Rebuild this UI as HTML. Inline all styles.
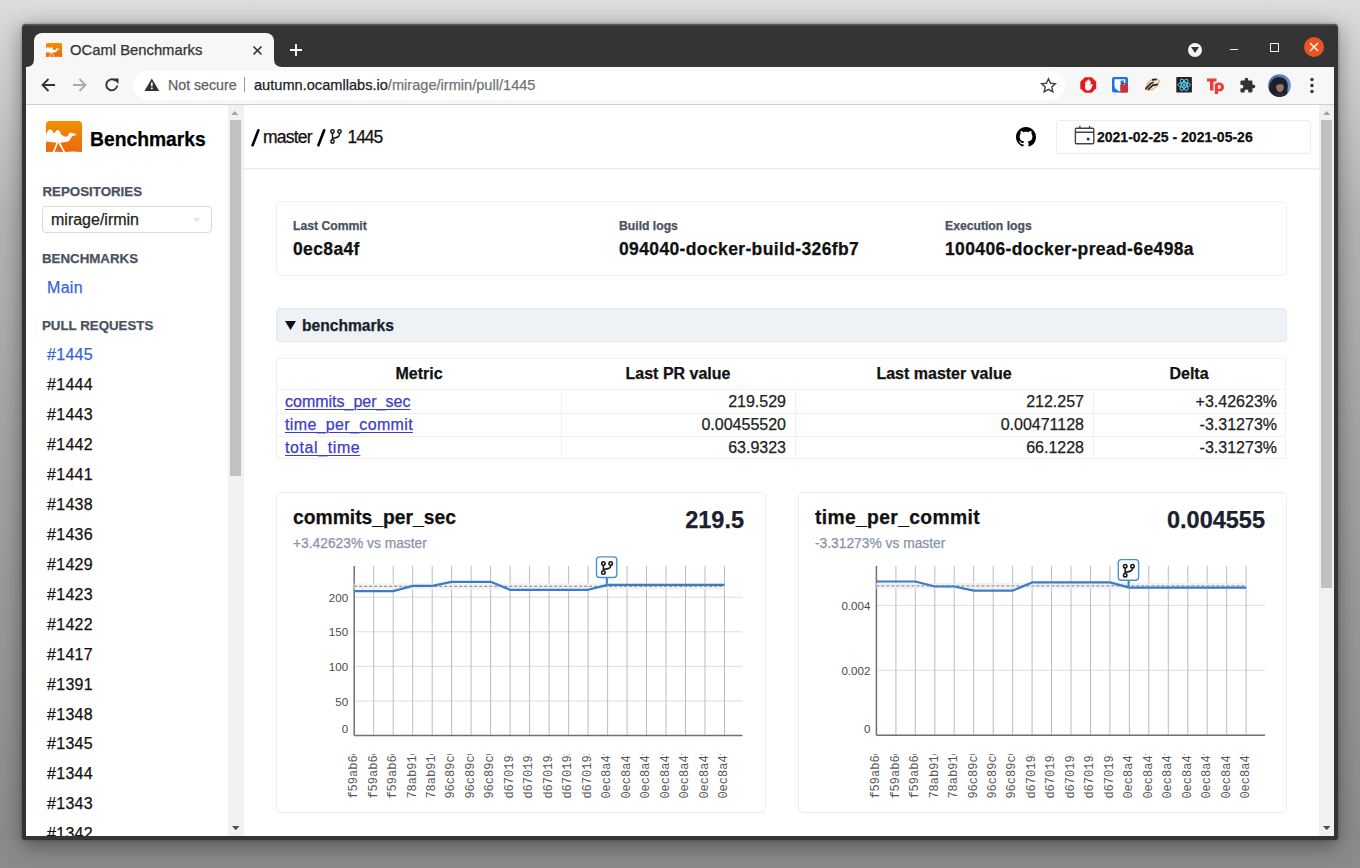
<!DOCTYPE html>
<html><head><meta charset="utf-8">
<style>
*{box-sizing:border-box}
html,body{margin:0;padding:0}
body{width:1360px;height:868px;overflow:hidden;position:relative;font-family:"Liberation Sans",sans-serif;
background:linear-gradient(180deg,#dcdcdc 0%,#cfcfcf 8%,#b4b4b4 25%,#a4a4a4 50%,#969696 75%,#8a8a8a 100%);}
.a{position:absolute}
.t{position:absolute;white-space:nowrap;line-height:1;-webkit-text-stroke:0.25px currentColor}
svg text{font-family:"Liberation Sans",sans-serif}
</style></head><body>

<div class="a" style="left:22px;top:24px;width:1316px;height:816px;background:#343434;border-radius:4px 4px 3px 3px;box-shadow:inset 0 1.5px 0 #5a5a5a,0 5px 22px rgba(0,0,0,.42),0 0 3px rgba(0,0,0,.35)"></div>
<div class="a" style="left:34px;top:33px;width:240px;height:34px;background:#f7f7f7;border-radius:8px 8px 0 0"></div>
<svg class="a" style="left:26px;top:59px" width="8" height="8"><path d="M0 8 Q8 8 8 0 V8Z" fill="#f7f7f7"/></svg>
<svg class="a" style="left:274px;top:59px" width="8" height="8"><path d="M0 0 Q0 8 8 8 H0Z" fill="#f7f7f7"/></svg>
<svg class="a" style="left:46px;top:43px" width="16" height="14" viewBox="0 0 36 31"><defs><linearGradient id="og" x1="0" y1="0" x2="0" y2="1"><stop offset="0" stop-color="#f29100"/><stop offset="1" stop-color="#ec670f"/></linearGradient></defs><path d="M0 3.5Q0 0 3.5 0H32.5Q36 0 36 3.5V31Q27 30 18 31Q9 30.5 0 31Z" fill="url(#og)"/><path d="M0 14.6C0.6 11.2 2.2 8.5 4.3 8.5C6.4 8.5 7 11.9 8.1 12.3C9.2 11.9 9.7 8.9 11.7 8.9C13.8 8.9 14.4 12.6 15.6 13.8C17 15 19.2 16 20.9 15.6C22.4 15.2 22.6 12 24.1 11.7C25.7 11.5 27.4 12.2 28.8 12.7L31 13.8L28.7 14.6C27.3 14.9 26.2 15 25.6 15.7C24.8 16.7 24.5 18.9 22.9 19.9C20.9 21 18.5 21.2 16 21.4L12 21.7C8 21.7 4 20.9 0 20.6Z" fill="#fff"/><path d="M11.6 21L7.4 31.5M12.8 21L18.6 31.5" stroke="#fff" stroke-width="1.6" fill="none"/></svg>
<div class="t" style="left:70px;top:43px;font-size:14.8px;color:#333;font-weight:normal;">OCaml Benchmarks</div>
<svg class="a" style="left:252px;top:45px" width="11" height="11"><path d="M1.5 1.5L9.5 9.5M9.5 1.5L1.5 9.5" stroke="#333" stroke-width="1.6"/></svg>
<svg class="a" style="left:289px;top:43px" width="14" height="14"><path d="M7 1V13M1 7H13" stroke="#fff" stroke-width="1.8"/></svg>
<div class="a" style="left:1188px;top:43px;width:14px;height:14px;border-radius:50%;background:#f4f4f4"></div>
<svg class="a" style="left:1191px;top:47px" width="8" height="6"><path d="M0 0H8L4 6Z" fill="#333"/></svg>
<div class="a" style="left:1230px;top:48.5px;width:8px;height:1.5px;background:#eee"></div>
<div class="a" style="left:1270px;top:43px;width:8.5px;height:8.5px;border:1.3px solid #eee"></div>
<div class="a" style="left:1304px;top:37px;width:20px;height:20px;border-radius:50%;background:#e95420"></div>
<svg class="a" style="left:1308px;top:41px" width="12" height="12"><path d="M2 2L10 10M10 2L2 10" stroke="#fff" stroke-width="1.4"/></svg>
<div class="a" style="left:26px;top:67px;width:1308px;height:38px;background:#f7f7f7;border-bottom:1px solid #cfcfcf"></div>
<div class="a" style="left:133px;top:71px;width:932px;height:28.5px;background:#fff;border-radius:14px"></div>
<svg class="a" style="left:40px;top:77px" width="16" height="16"><path d="M15 8H2.5M8.5 2L2.5 8L8.5 14" fill="none" stroke="#333" stroke-width="1.8"/></svg>
<svg class="a" style="left:72px;top:77px" width="16" height="16"><path d="M1 8H13.5M7.5 2L13.5 8L7.5 14" fill="none" stroke="#aaa" stroke-width="1.8"/></svg>
<svg class="a" style="left:104px;top:77px" width="16" height="16"><path d="M13.2 8.5A5.5 5.5 0 1 1 11.6 3.9" fill="none" stroke="#333" stroke-width="1.9"/><path d="M9 1.5H14.5V7Z" fill="#333"/></svg>
<svg class="a" style="left:144px;top:78px" width="16" height="14"><path d="M7.8 0.5L15.2 13H0.4Z" fill="#333"/><path d="M7.8 4.6V8.3M7.8 9.6V11.3" stroke="#fff" stroke-width="1.7"/></svg>
<div class="t" style="left:168px;top:78px;font-size:14.2px;color:#5f6368;font-weight:normal;">Not secure</div>
<div class="a" style="left:243.5px;top:77px;width:1px;height:15px;background:#999"></div>
<div class="t" style="left:254px;top:78px;font-size:14.6px;color:#202124;font-weight:normal;">autumn.ocamllabs.io<span style="color:#70757a">/mirage/irmin/pull/1445</span></div>
<svg class="a" style="left:1040px;top:77px" width="17" height="17" viewBox="0 0 24 24"><path d="M12 2.5l2.9 6.3 6.9.7-5.2 4.6 1.5 6.8L12 17.4l-6.1 3.5 1.5-6.8-5.2-4.6 6.9-.7z" fill="none" stroke="#444" stroke-width="2"/></svg>
<svg class="a" style="left:1080px;top:77px" width="16.5" height="16" viewBox="0 0 16.5 16"><path d="M4.8 0.3H11.7L16.2 4.7V11.3L11.7 15.7H4.8L0.3 11.3V4.7Z" fill="#e21b1b"/><path d="M5.6 12.4C5 11.2 5 9.5 5.2 7.8V5.2C5.2 4.6 6.4 4.6 6.4 5.2V7.6L6.6 3.6C6.6 3 7.8 3 7.8 3.6V7.5L8 2.9C8 2.3 9.2 2.3 9.2 2.9L9.3 7.6L9.5 3.8C9.6 3.2 10.7 3.3 10.7 3.9V8.7L11.6 7.3C12 6.7 13 7.1 12.7 7.8L11.1 11.6C10.6 12.9 9.6 13.5 8.3 13.5C7 13.5 6.1 13.2 5.6 12.4Z" fill="#fff"/></svg>
<svg class="a" style="left:1112px;top:77px" width="16" height="16" viewBox="0 0 16 16"><rect x="0" y="0" width="16" height="15.5" rx="2" fill="#1a73e8"/><path d="M2.5 2.2H13.3V8.5C13.3 11.8 10.5 13.4 7.9 14.3C5.2 13.4 2.5 11.8 2.5 8.5Z" fill="#fff"/><path d="M8.6 3.4H11.8V8.6C11.8 10.8 10.3 12 8.6 12.8Z" fill="#1a73e8"/><path d="M9.6 8.2V7.4C9.6 5.9 13.8 5.9 13.8 7.4V8.2" stroke="#c62828" stroke-width="1.3" fill="none"/><rect x="8.3" y="8" width="7.7" height="7.5" rx="0.8" fill="#d32f2f"/></svg>
<svg class="a" style="left:1144px;top:78px" width="16" height="13" viewBox="0 0 16 13"><path d="M1 11.5L4 4.5L8 1.5L12.5 0.8L15.3 2.5L14 7L9 11.5L4 12.2Z" fill="#f3e6d8" stroke="#e8893a" stroke-width="0.9"/><path d="M1.6 11L6.5 5.6L9.5 4.2M4 11.6L8.6 7.3L13.8 6.3M8 1.8L12.6 1.4" stroke="#222" stroke-width="1.7" fill="none"/></svg>
<svg class="a" style="left:1176px;top:77px" width="16.2" height="15.6" viewBox="0 0 18 18"><rect width="18" height="18" rx="0.8" fill="#20232a"/><g fill="none" stroke="#61dafb" stroke-width="1.1"><ellipse cx="9" cy="9" rx="7.2" ry="2.8"/><ellipse cx="9" cy="9" rx="7.2" ry="2.8" transform="rotate(60 9 9)"/><ellipse cx="9" cy="9" rx="7.2" ry="2.8" transform="rotate(120 9 9)"/></g><circle cx="9" cy="9" r="1.5" fill="#61dafb"/></svg>
<svg class="a" style="left:1206px;top:77px" width="20" height="17" viewBox="0 0 20 17"><path d="M1 1.5H10.5V4.6H7.5V13.5H4V4.6H1Z" fill="#ee3b36"/><path d="M9.5 6.4C10.6 5.8 11.8 5.5 13 5.5C16 5.5 18 7.3 18 10C18 12.8 16.1 14.5 13.5 14.5C12.9 14.5 12.4 14.4 12 14.2V17H8.8V7.2Z M12 8.3V11.6C12.4 11.8 12.8 11.9 13.2 11.9C14.3 11.9 14.9 11.1 14.9 10C14.9 8.8 14.2 8 13.1 8C12.7 8 12.3 8.1 12 8.3Z" fill="#ee3b36" fill-rule="evenodd"/></svg>
<svg class="a" style="left:1239px;top:77px" width="17" height="17" viewBox="0 0 24 24"><path d="M20.5 11H19V7a2 2 0 0 0-2-2h-4V3.5a2.5 2.5 0 0 0-5 0V5H4a2 2 0 0 0-2 2v3.8h1.5a2.7 2.7 0 0 1 0 5.4H2V20a2 2 0 0 0 2 2h3.8v-1.5a2.7 2.7 0 0 1 5.4 0V22H17a2 2 0 0 0 2-2v-4h1.5a2.5 2.5 0 0 0 0-5z" fill="#333"/></svg>
<svg class="a" style="left:1268px;top:74px" width="23" height="23" viewBox="0 0 23 23"><defs><clipPath id="av"><circle cx="11.5" cy="11.5" r="11.3"/></clipPath><radialGradient id="avg" cx="0.7" cy="0.5" r="0.7"><stop offset="0" stop-color="#7fa8dc"/><stop offset="1" stop-color="#3f6aa8"/></radialGradient></defs><g clip-path="url(#av)"><rect width="23" height="23" fill="url(#avg)"/><path d="M1 23V15C1.5 8.5 4.5 3.5 10.5 3C16.5 2.8 19.5 6.5 19.8 11.5L19 23Z" fill="#1c2028"/><ellipse cx="12" cy="13.3" rx="3.8" ry="4.8" fill="#9a7660"/><path d="M7.8 11.2C8.6 8.4 10.8 7.8 12.6 7.9C14.8 8.1 16 9.6 16.2 11.3C14.8 10.2 12.8 9.9 10.6 10.4Z" fill="#1c2028"/><path d="M5 23C5.8 20 8.5 18.3 12 18.3C15.5 18.3 18 20 18.8 23Z" fill="#262b36"/></g></svg>
<svg class="a" style="left:1309px;top:77px" width="6" height="17"><circle cx="3" cy="2.5" r="1.7" fill="#333"/><circle cx="3" cy="8.5" r="1.7" fill="#333"/><circle cx="3" cy="14.5" r="1.7" fill="#333"/></svg>
<div class="a" style="left:26px;top:105px;width:1308px;height:731px;background:#fff;overflow:hidden"></div>
<div class="a" style="left:228px;top:105px;width:16px;height:731px;background:#f1f1f1"></div>
<div class="a" style="left:230px;top:120px;width:11px;height:356px;background:#c1c1c1"></div>
<svg class="a" style="left:231.3px;top:111px" width="7.5" height="4.2"><path d="M0 4.2H7.5L3.75 0Z" fill="#a3a3a3"/></svg>
<svg class="a" style="left:231.5px;top:825.5px" width="7.5" height="4.2"><path d="M0 0H7.5L3.75 4.2Z" fill="#505050"/></svg>
<div class="a" style="left:1319px;top:105px;width:15px;height:731px;background:#f1f1f1"></div>
<div class="a" style="left:1321px;top:120px;width:11px;height:468px;background:#c1c1c1"></div>
<svg class="a" style="left:1322.8px;top:111px" width="7.5" height="4.2"><path d="M0 4.2H7.5L3.75 0Z" fill="#a3a3a3"/></svg>
<svg class="a" style="left:1322.7px;top:826px" width="7.5" height="4.2"><path d="M0 0H7.5L3.75 4.2Z" fill="#505050"/></svg>
<svg class="a" style="left:46px;top:121px" width="36" height="31" viewBox="0 0 36 31"><defs><linearGradient id="og2" x1="0" y1="0" x2="0" y2="1"><stop offset="0" stop-color="#f29100"/><stop offset="1" stop-color="#ec670f"/></linearGradient></defs><path d="M0 3.5Q0 0 3.5 0H32.5Q36 0 36 3.5V31Q27 30 18 31Q9 30.5 0 31Z" fill="url(#og2)"/><path d="M0 14.6C0.6 11.2 2.2 8.5 4.3 8.5C6.4 8.5 7 11.9 8.1 12.3C9.2 11.9 9.7 8.9 11.7 8.9C13.8 8.9 14.4 12.6 15.6 13.8C17 15 19.2 16 20.9 15.6C22.4 15.2 22.6 12 24.1 11.7C25.7 11.5 27.4 12.2 28.8 12.7L31 13.8L28.7 14.6C27.3 14.9 26.2 15 25.6 15.7C24.8 16.7 24.5 18.9 22.9 19.9C20.9 21 18.5 21.2 16 21.4L12 21.7C8 21.7 4 20.9 0 20.6Z" fill="#fff"/><path d="M11.6 21L7.4 31.5M12.8 21L18.6 31.5" stroke="#fff" stroke-width="1.6" fill="none"/></svg>
<div class="t" style="left:90px;top:130px;font-size:19.3px;color:#000;font-weight:bold;">Benchmarks</div>
<div class="t" style="left:42.5px;top:184.5px;font-size:13.3px;color:#4a5260;font-weight:bold;">REPOSITORIES</div>
<div class="a" style="left:42px;top:206px;width:170px;height:27px;border:1px solid #d9d9d9;border-radius:4px;background:#fff"></div>
<div class="t" style="left:51px;top:212px;font-size:16px;color:#222;font-weight:normal;">mirage/irmin</div>
<svg class="a" style="left:193px;top:218px" width="7.5" height="4"><path d="M0 0H7.5L3.75 4Z" fill="#e2e2e2"/></svg>
<div class="t" style="left:42px;top:252px;font-size:13.3px;color:#4a5260;font-weight:bold;">BENCHMARKS</div>
<div class="t" style="left:47px;top:280px;font-size:16px;color:#3466d6;font-weight:normal;letter-spacing:0.3px">Main</div>
<div class="t" style="left:42px;top:319px;font-size:13.3px;color:#4a5260;font-weight:bold;">PULL REQUESTS</div>
<div class="t" style="left:47px;top:347.0px;font-size:16px;color:#3466d6;font-weight:normal;letter-spacing:0.3px">#1445</div>
<div class="t" style="left:47px;top:376.96px;font-size:16px;color:#111;font-weight:normal;letter-spacing:0.3px">#1444</div>
<div class="t" style="left:47px;top:406.92px;font-size:16px;color:#111;font-weight:normal;letter-spacing:0.3px">#1443</div>
<div class="t" style="left:47px;top:436.88px;font-size:16px;color:#111;font-weight:normal;letter-spacing:0.3px">#1442</div>
<div class="t" style="left:47px;top:466.84000000000003px;font-size:16px;color:#111;font-weight:normal;letter-spacing:0.3px">#1441</div>
<div class="t" style="left:47px;top:496.8px;font-size:16px;color:#111;font-weight:normal;letter-spacing:0.3px">#1438</div>
<div class="t" style="left:47px;top:526.76px;font-size:16px;color:#111;font-weight:normal;letter-spacing:0.3px">#1436</div>
<div class="t" style="left:47px;top:556.72px;font-size:16px;color:#111;font-weight:normal;letter-spacing:0.3px">#1429</div>
<div class="t" style="left:47px;top:586.6800000000001px;font-size:16px;color:#111;font-weight:normal;letter-spacing:0.3px">#1423</div>
<div class="t" style="left:47px;top:616.64px;font-size:16px;color:#111;font-weight:normal;letter-spacing:0.3px">#1422</div>
<div class="t" style="left:47px;top:646.6px;font-size:16px;color:#111;font-weight:normal;letter-spacing:0.3px">#1417</div>
<div class="t" style="left:47px;top:676.56px;font-size:16px;color:#111;font-weight:normal;letter-spacing:0.3px">#1391</div>
<div class="t" style="left:47px;top:706.52px;font-size:16px;color:#111;font-weight:normal;letter-spacing:0.3px">#1348</div>
<div class="t" style="left:47px;top:736.48px;font-size:16px;color:#111;font-weight:normal;letter-spacing:0.3px">#1345</div>
<div class="t" style="left:47px;top:766.44px;font-size:16px;color:#111;font-weight:normal;letter-spacing:0.3px">#1344</div>
<div class="t" style="left:47px;top:796.4000000000001px;font-size:16px;color:#111;font-weight:normal;letter-spacing:0.3px">#1343</div>
<div class="t" style="left:47px;top:826.36px;font-size:16px;color:#111;font-weight:normal;letter-spacing:0.3px">#1342</div>
<div class="a" style="left:244px;top:168px;width:1075px;height:1px;background:#e9ebee"></div><div class="a" style="left:244px;top:169px;width:1075px;height:1px;background:#f6f7f8"></div>
<svg class="a" style="left:248px;top:126px" width="14" height="22"><path d="M10.4 4.3L4.6 19.2" stroke="#000" stroke-width="2.6" stroke-linecap="round"/></svg>
<svg class="a" style="left:314px;top:126px" width="14" height="22"><path d="M10.2 4.3L4.4 19.2" stroke="#000" stroke-width="2.6" stroke-linecap="round"/></svg>
<div class="t" style="left:263px;top:129px;font-size:17.5px;color:#111;font-weight:normal;letter-spacing:-0.8px">master</div>
<svg class="a" style="left:330px;top:129px" width="12" height="15" viewBox="0 0 12 15"><g fill="none" stroke="#111" stroke-width="1.4"><circle cx="2.5" cy="2.5" r="1.7"/><circle cx="9.5" cy="2.5" r="1.7"/><circle cx="2.5" cy="12.5" r="1.7"/><path d="M2.5 4.2V10.8M9.5 4.2V5.5C9.5 8 7 8.5 2.5 9.5"/></g></svg>
<div class="t" style="left:347.5px;top:129px;font-size:17.5px;color:#111;font-weight:normal;letter-spacing:-1.1px">1445</div>
<svg class="a" style="left:1015.5px;top:126.5px" width="20" height="20" viewBox="0 0 16 16"><path fill="#000" d="M8 0C3.58 0 0 3.58 0 8c0 3.54 2.29 6.53 5.47 7.59.4.07.55-.17.55-.38 0-.19-.01-.82-.01-1.49-2.01.37-2.53-.49-2.69-.94-.09-.23-.48-.94-.82-1.13-.28-.15-.68-.52-.01-.53.63-.01 1.08.58 1.23.82.72 1.21 1.87.87 2.33.66.07-.52.28-.87.51-1.07-1.78-.2-3.64-.89-3.64-3.95 0-.87.31-1.59.82-2.15-.08-.2-.36-1.02.08-2.12 0 0 .67-.21 2.2.82.64-.18 1.32-.27 2-.27.68 0 1.36.09 2 .27 1.53-1.04 2.2-.82 2.2-.82.44 1.1.16 1.92.08 2.12.51.56.82 1.27.82 2.15 0 3.07-1.87 3.75-3.65 3.95.29.25.54.73.54 1.48 0 1.07-.01 1.93-.01 2.2 0 .21.15.46.55.38A8.013 8.013 0 0016 8c0-4.42-3.58-8-8-8z"/></svg>
<div class="a" style="left:1056px;top:120px;width:255px;height:34px;border:1px solid #ececec;border-radius:4px"></div>
<svg class="a" style="left:1074px;top:125px" width="21" height="20" viewBox="0 0 21 20"><g fill="none" stroke="#444" stroke-width="1.4"><rect x="1.4" y="3.2" width="18.4" height="15.6" rx="1.2"/><path d="M1.4 7.3H19.8M5.9 0.8V3.5M15.6 0.8V3.5"/></g><circle cx="14.2" cy="14" r="1.5" fill="#333"/></svg>
<div class="t" style="left:1097px;top:130px;font-size:14px;color:#111;font-weight:bold;">2021-02-25 - 2021-05-26</div>
<div class="a" style="left:276px;top:201px;width:1011px;height:75px;border:1px solid #eef0f2;border-radius:5px"></div>
<div class="t" style="left:293px;top:219.5px;font-size:12.2px;color:#4a5260;font-weight:bold;">Last Commit</div>
<div class="t" style="left:293px;top:241px;font-size:17.5px;color:#111;font-weight:bold;letter-spacing:0.37px">0ec8a4f</div>
<div class="t" style="left:619px;top:219.5px;font-size:12.2px;color:#4a5260;font-weight:bold;">Build logs</div>
<div class="t" style="left:619px;top:241px;font-size:17.5px;color:#111;font-weight:bold;letter-spacing:0.37px">094040-docker-build-326fb7</div>
<div class="t" style="left:945px;top:219.5px;font-size:12.2px;color:#4a5260;font-weight:bold;">Execution logs</div>
<div class="t" style="left:945px;top:241px;font-size:17.5px;color:#111;font-weight:bold;letter-spacing:0.37px">100406-docker-pread-6e498a</div>
<div class="a" style="left:276px;top:308px;width:1011px;height:34px;background:#edf2f7;border:1px solid #e2e8f0;border-radius:4px"></div>
<svg class="a" style="left:285px;top:321px" width="11" height="9"><path d="M0 0H11L5.5 9Z" fill="#111"/></svg>
<div class="t" style="left:302px;top:318px;font-size:15.6px;color:#1a202c;font-weight:bold;">benchmarks</div>
<div class="a" style="left:276px;top:358px;width:1010px;height:101px;border:1px solid #eef0f2"></div>
<div class="a" style="left:276px;top:389px;width:1010px;height:1px;background:#eef0f2"></div>
<div class="a" style="left:276px;top:413px;width:1010px;height:1px;background:#eef0f2"></div>
<div class="a" style="left:276px;top:436px;width:1010px;height:1px;background:#eef0f2"></div>
<div class="a" style="left:561px;top:390px;width:1px;height:69px;background:#eef0f2"></div>
<div class="a" style="left:795px;top:390px;width:1px;height:69px;background:#eef0f2"></div>
<div class="a" style="left:1093px;top:390px;width:1px;height:69px;background:#eef0f2"></div>
<div class="t" style="left:319px;width:200px;text-align:center;top:366px;font-size:16px;font-weight:bold;color:#111">Metric</div>
<div class="t" style="left:578px;width:200px;text-align:center;top:366px;font-size:16px;font-weight:bold;color:#111">Last PR value</div>
<div class="t" style="left:844px;width:200px;text-align:center;top:366px;font-size:16px;font-weight:bold;color:#111">Last master value</div>
<div class="t" style="left:1089px;width:200px;text-align:center;top:366px;font-size:16px;font-weight:bold;color:#111">Delta</div>
<div class="t" style="left:285px;top:394px;font-size:16px;color:#3c3cc8;font-weight:normal;letter-spacing:0px"><span style="text-decoration:underline;text-decoration-thickness:1.3px;text-underline-offset:2px">commits_per_sec</span></div>
<div class="t" style="left:561px;width:225px;text-align:right;top:394px;font-size:16px;color:#222">219.529</div>
<div class="t" style="left:795px;width:289px;text-align:right;top:394px;font-size:16px;color:#222">212.257</div>
<div class="t" style="left:1093px;width:184px;text-align:right;top:394px;font-size:16px;color:#222">+3.42623%</div>
<div class="t" style="left:285px;top:417px;font-size:16px;color:#3c3cc8;font-weight:normal;letter-spacing:0.35px"><span style="text-decoration:underline;text-decoration-thickness:1.3px;text-underline-offset:2px">time_per_commit</span></div>
<div class="t" style="left:561px;width:225px;text-align:right;top:417px;font-size:16px;color:#222">0.00455520</div>
<div class="t" style="left:795px;width:289px;text-align:right;top:417px;font-size:16px;color:#222">0.00471128</div>
<div class="t" style="left:1093px;width:184px;text-align:right;top:417px;font-size:16px;color:#222">-3.31273%</div>
<div class="t" style="left:285px;top:440px;font-size:16px;color:#3c3cc8;font-weight:normal;letter-spacing:0.6px"><span style="text-decoration:underline;text-decoration-thickness:1.3px;text-underline-offset:2px">total_time</span></div>
<div class="t" style="left:561px;width:225px;text-align:right;top:440px;font-size:16px;color:#222">63.9323</div>
<div class="t" style="left:795px;width:289px;text-align:right;top:440px;font-size:16px;color:#222">66.1228</div>
<div class="t" style="left:1093px;width:184px;text-align:right;top:440px;font-size:16px;color:#222">-3.31273%</div>
<div class="a" style="left:276px;top:492px;width:490px;height:321px;border:1px solid #eceef0;border-radius:5px;box-shadow:0 1px 1px rgba(0,0,0,.02)"></div>
<div class="a" style="left:798px;top:492px;width:489px;height:321px;border:1px solid #eceef0;border-radius:5px;box-shadow:0 1px 1px rgba(0,0,0,.02)"></div>
<div class="t" style="left:293px;top:508px;font-size:19.3px;color:#111;font-weight:bold;">commits_per_sec</div>
<div class="t" style="left:293px;top:537px;font-size:13.8px;color:#8795a8;font-weight:normal;">+3.42623% vs master</div>
<div class="t" style="left:600px;width:144px;text-align:right;top:509px;font-size:23.5px;font-weight:bold;color:#1a202c">219.5</div>
<div class="t" style="left:815px;top:508px;font-size:19.3px;color:#111;font-weight:bold;letter-spacing:0.35px">time_per_commit</div>
<div class="t" style="left:815px;top:537px;font-size:13.8px;color:#8795a8;font-weight:normal;">-3.31273% vs master</div>
<div class="t" style="left:1065px;width:200px;text-align:right;top:509px;font-size:23.5px;font-weight:bold;color:#1a202c">0.004555</div>
<svg class="a" style="left:0;top:0" width="1360" height="868"><defs><clipPath id="lc"><rect x="0" y="754" width="1360" height="60"/></clipPath></defs>
<line x1="354.2" y1="597.2" x2="742.4" y2="597.2" stroke="#dedede" stroke-width="1"/>
<line x1="354.2" y1="631.8" x2="742.4" y2="631.8" stroke="#dedede" stroke-width="1"/>
<line x1="354.2" y1="666.4" x2="742.4" y2="666.4" stroke="#dedede" stroke-width="1"/>
<line x1="354.2" y1="701" x2="742.4" y2="701" stroke="#dedede" stroke-width="1"/>
<line x1="354.2" y1="735.6" x2="742.4" y2="735.6" stroke="#dedede" stroke-width="1"/>
<line x1="373.7" y1="566" x2="373.7" y2="735.6" stroke="#bdbdbd" stroke-width="1"/>
<line x1="393.2" y1="566" x2="393.2" y2="735.6" stroke="#bdbdbd" stroke-width="1"/>
<line x1="412.7" y1="566" x2="412.7" y2="735.6" stroke="#bdbdbd" stroke-width="1"/>
<line x1="432.2" y1="566" x2="432.2" y2="735.6" stroke="#bdbdbd" stroke-width="1"/>
<line x1="451.6" y1="566" x2="451.6" y2="735.6" stroke="#bdbdbd" stroke-width="1"/>
<line x1="471.1" y1="566" x2="471.1" y2="735.6" stroke="#bdbdbd" stroke-width="1"/>
<line x1="490.6" y1="566" x2="490.6" y2="735.6" stroke="#bdbdbd" stroke-width="1"/>
<line x1="510.1" y1="566" x2="510.1" y2="735.6" stroke="#bdbdbd" stroke-width="1"/>
<line x1="529.6" y1="566" x2="529.6" y2="735.6" stroke="#bdbdbd" stroke-width="1"/>
<line x1="549.1" y1="566" x2="549.1" y2="735.6" stroke="#bdbdbd" stroke-width="1"/>
<line x1="568.6" y1="566" x2="568.6" y2="735.6" stroke="#bdbdbd" stroke-width="1"/>
<line x1="588.1" y1="566" x2="588.1" y2="735.6" stroke="#bdbdbd" stroke-width="1"/>
<line x1="607.6" y1="566" x2="607.6" y2="735.6" stroke="#bdbdbd" stroke-width="1"/>
<line x1="627.1" y1="566" x2="627.1" y2="735.6" stroke="#bdbdbd" stroke-width="1"/>
<line x1="646.5" y1="566" x2="646.5" y2="735.6" stroke="#bdbdbd" stroke-width="1"/>
<line x1="666.0" y1="566" x2="666.0" y2="735.6" stroke="#bdbdbd" stroke-width="1"/>
<line x1="685.5" y1="566" x2="685.5" y2="735.6" stroke="#bdbdbd" stroke-width="1"/>
<line x1="705.0" y1="566" x2="705.0" y2="735.6" stroke="#bdbdbd" stroke-width="1"/>
<line x1="724.5" y1="566" x2="724.5" y2="735.6" stroke="#bdbdbd" stroke-width="1"/>
<line x1="354.2" y1="566" x2="354.2" y2="735.6" stroke="#707070" stroke-width="1.5"/>
<line x1="354.2" y1="735.6" x2="742.4" y2="735.6" stroke="#707070" stroke-width="1.5"/>
<text x="348.2" y="601.7" text-anchor="end" style="font-size:11.6px" fill="#4a4a4a">200</text>
<text x="348.2" y="636.3" text-anchor="end" style="font-size:11.6px" fill="#4a4a4a">150</text>
<text x="348.2" y="670.9" text-anchor="end" style="font-size:11.6px" fill="#4a4a4a">100</text>
<text x="348.2" y="705.5" text-anchor="end" style="font-size:11.6px" fill="#4a4a4a">50</text>
<text x="348.2" y="733.3000000000001" text-anchor="end" style="font-size:11.6px" fill="#4a4a4a">0</text>
<rect x="354.2" y="583.4" width="370.31" height="6" fill="#eee" opacity=".8"/>
<line x1="354.2" y1="586.4" x2="724.5" y2="586.4" stroke="#999" stroke-width="1.3" stroke-dasharray="3 2"/>
<polyline points="354.2,591.1 373.7,591.1 393.2,591.1 412.7,585.9 432.2,585.9 451.6,581.8 471.1,581.8 490.6,581.8 510.1,589.8 529.6,589.8 549.1,589.8 568.6,589.8 588.1,589.8 607.6,584.9 627.1,584.9 646.5,584.9 666.0,584.9 685.5,584.9 705.0,584.9 724.5,584.9" fill="none" stroke="#3a7cc9" stroke-width="2.2" stroke-linejoin="round"/>
<line x1="606.8" y1="576.9" x2="606.8" y2="584.9" stroke="#3d85d6" stroke-width="2"/>
<rect x="596.5" y="556.9" width="20.3" height="20.6" rx="3" fill="#fff" stroke="#4a8fdc" stroke-width="1.4"/>
<g transform="translate(596.3,556.9)" fill="none" stroke="#1a1a1a" stroke-width="1.6"><circle cx="7.1" cy="6.6" r="1.7"/><circle cx="14.4" cy="6.6" r="1.7"/><circle cx="7.1" cy="15.6" r="1.7"/><path d="M7.1 8.3V13.9M14.4 8.3V9C14.4 11.3 12.5 11.8 7.1 12.6"/></g>
<g clip-path="url(#lc)">
<text transform="translate(357.0,798.6) rotate(-90)" style="font-family:'Liberation Mono',monospace;font-size:12px" fill="#585858">f59ab6c</text>
<text transform="translate(376.5,798.6) rotate(-90)" style="font-family:'Liberation Mono',monospace;font-size:12px" fill="#585858">f59ab6c</text>
<text transform="translate(396.0,798.6) rotate(-90)" style="font-family:'Liberation Mono',monospace;font-size:12px" fill="#585858">f59ab6c</text>
<text transform="translate(415.5,798.6) rotate(-90)" style="font-family:'Liberation Mono',monospace;font-size:12px" fill="#585858">78ab91c</text>
<text transform="translate(435.0,798.6) rotate(-90)" style="font-family:'Liberation Mono',monospace;font-size:12px" fill="#585858">78ab91c</text>
<text transform="translate(454.4,798.6) rotate(-90)" style="font-family:'Liberation Mono',monospace;font-size:12px" fill="#585858">96c89c0</text>
<text transform="translate(473.9,798.6) rotate(-90)" style="font-family:'Liberation Mono',monospace;font-size:12px" fill="#585858">96c89c0</text>
<text transform="translate(493.4,798.6) rotate(-90)" style="font-family:'Liberation Mono',monospace;font-size:12px" fill="#585858">96c89c0</text>
<text transform="translate(512.9,798.6) rotate(-90)" style="font-family:'Liberation Mono',monospace;font-size:12px" fill="#585858">d670193</text>
<text transform="translate(532.4,798.6) rotate(-90)" style="font-family:'Liberation Mono',monospace;font-size:12px" fill="#585858">d670193</text>
<text transform="translate(551.9,798.6) rotate(-90)" style="font-family:'Liberation Mono',monospace;font-size:12px" fill="#585858">d670193</text>
<text transform="translate(571.4,798.6) rotate(-90)" style="font-family:'Liberation Mono',monospace;font-size:12px" fill="#585858">d670193</text>
<text transform="translate(590.9,798.6) rotate(-90)" style="font-family:'Liberation Mono',monospace;font-size:12px" fill="#585858">d670193</text>
<text transform="translate(610.4,798.6) rotate(-90)" style="font-family:'Liberation Mono',monospace;font-size:12px" fill="#585858">0ec8a4f</text>
<text transform="translate(629.9,798.6) rotate(-90)" style="font-family:'Liberation Mono',monospace;font-size:12px" fill="#585858">0ec8a4f</text>
<text transform="translate(649.3,798.6) rotate(-90)" style="font-family:'Liberation Mono',monospace;font-size:12px" fill="#585858">0ec8a4f</text>
<text transform="translate(668.8,798.6) rotate(-90)" style="font-family:'Liberation Mono',monospace;font-size:12px" fill="#585858">0ec8a4f</text>
<text transform="translate(688.3,798.6) rotate(-90)" style="font-family:'Liberation Mono',monospace;font-size:12px" fill="#585858">0ec8a4f</text>
<text transform="translate(707.8,798.6) rotate(-90)" style="font-family:'Liberation Mono',monospace;font-size:12px" fill="#585858">0ec8a4f</text>
<text transform="translate(727.3,798.6) rotate(-90)" style="font-family:'Liberation Mono',monospace;font-size:12px" fill="#585858">0ec8a4f</text>
</g>
<line x1="876.4" y1="605.4" x2="1265" y2="605.4" stroke="#dedede" stroke-width="1"/>
<line x1="876.4" y1="670.3" x2="1265" y2="670.3" stroke="#dedede" stroke-width="1"/>
<line x1="876.4" y1="735.2" x2="1265" y2="735.2" stroke="#dedede" stroke-width="1"/>
<line x1="895.9" y1="566" x2="895.9" y2="735.2" stroke="#bdbdbd" stroke-width="1"/>
<line x1="915.3" y1="566" x2="915.3" y2="735.2" stroke="#bdbdbd" stroke-width="1"/>
<line x1="934.8" y1="566" x2="934.8" y2="735.2" stroke="#bdbdbd" stroke-width="1"/>
<line x1="954.2" y1="566" x2="954.2" y2="735.2" stroke="#bdbdbd" stroke-width="1"/>
<line x1="973.7" y1="566" x2="973.7" y2="735.2" stroke="#bdbdbd" stroke-width="1"/>
<line x1="993.2" y1="566" x2="993.2" y2="735.2" stroke="#bdbdbd" stroke-width="1"/>
<line x1="1012.6" y1="566" x2="1012.6" y2="735.2" stroke="#bdbdbd" stroke-width="1"/>
<line x1="1032.1" y1="566" x2="1032.1" y2="735.2" stroke="#bdbdbd" stroke-width="1"/>
<line x1="1051.5" y1="566" x2="1051.5" y2="735.2" stroke="#bdbdbd" stroke-width="1"/>
<line x1="1071.0" y1="566" x2="1071.0" y2="735.2" stroke="#bdbdbd" stroke-width="1"/>
<line x1="1090.5" y1="566" x2="1090.5" y2="735.2" stroke="#bdbdbd" stroke-width="1"/>
<line x1="1109.9" y1="566" x2="1109.9" y2="735.2" stroke="#bdbdbd" stroke-width="1"/>
<line x1="1129.4" y1="566" x2="1129.4" y2="735.2" stroke="#bdbdbd" stroke-width="1"/>
<line x1="1148.8" y1="566" x2="1148.8" y2="735.2" stroke="#bdbdbd" stroke-width="1"/>
<line x1="1168.3" y1="566" x2="1168.3" y2="735.2" stroke="#bdbdbd" stroke-width="1"/>
<line x1="1187.8" y1="566" x2="1187.8" y2="735.2" stroke="#bdbdbd" stroke-width="1"/>
<line x1="1207.2" y1="566" x2="1207.2" y2="735.2" stroke="#bdbdbd" stroke-width="1"/>
<line x1="1226.7" y1="566" x2="1226.7" y2="735.2" stroke="#bdbdbd" stroke-width="1"/>
<line x1="1246.1" y1="566" x2="1246.1" y2="735.2" stroke="#bdbdbd" stroke-width="1"/>
<line x1="876.4" y1="566" x2="876.4" y2="735.2" stroke="#707070" stroke-width="1.5"/>
<line x1="876.4" y1="735.2" x2="1265" y2="735.2" stroke="#707070" stroke-width="1.5"/>
<text x="870.4" y="609.9" text-anchor="end" style="font-size:11.6px" fill="#4a4a4a">0.004</text>
<text x="870.4" y="674.8" text-anchor="end" style="font-size:11.6px" fill="#4a4a4a">0.002</text>
<text x="870.4" y="732.9000000000001" text-anchor="end" style="font-size:11.6px" fill="#4a4a4a">0</text>
<rect x="876.4" y="582.8" width="369.7399999999999" height="6" fill="#eee" opacity=".8"/>
<line x1="876.4" y1="585.8" x2="1246.1" y2="585.8" stroke="#999" stroke-width="1.3" stroke-dasharray="3 2"/>
<polyline points="876.4,581.5 895.9,581.5 915.3,581.5 934.8,586.5 954.2,586.5 973.7,590.7 993.2,590.7 1012.6,590.7 1032.1,582.4 1051.5,582.4 1071.0,582.4 1090.5,582.4 1109.9,582.4 1129.4,587.6 1148.8,587.6 1168.3,587.6 1187.8,587.6 1207.2,587.6 1226.7,587.6 1246.1,587.6" fill="none" stroke="#3a7cc9" stroke-width="2.2" stroke-linejoin="round"/>
<line x1="1128.6" y1="579.6" x2="1128.6" y2="587.6" stroke="#3d85d6" stroke-width="2"/>
<rect x="1118.3" y="559.6" width="20.3" height="20.6" rx="3" fill="#fff" stroke="#4a8fdc" stroke-width="1.4"/>
<g transform="translate(1118.1,559.6)" fill="none" stroke="#1a1a1a" stroke-width="1.6"><circle cx="7.1" cy="6.6" r="1.7"/><circle cx="14.4" cy="6.6" r="1.7"/><circle cx="7.1" cy="15.6" r="1.7"/><path d="M7.1 8.3V13.9M14.4 8.3V9C14.4 11.3 12.5 11.8 7.1 12.6"/></g>
<g clip-path="url(#lc)">
<text transform="translate(879.2,798.6) rotate(-90)" style="font-family:'Liberation Mono',monospace;font-size:12px" fill="#585858">f59ab6c</text>
<text transform="translate(898.7,798.6) rotate(-90)" style="font-family:'Liberation Mono',monospace;font-size:12px" fill="#585858">f59ab6c</text>
<text transform="translate(918.1,798.6) rotate(-90)" style="font-family:'Liberation Mono',monospace;font-size:12px" fill="#585858">f59ab6c</text>
<text transform="translate(937.6,798.6) rotate(-90)" style="font-family:'Liberation Mono',monospace;font-size:12px" fill="#585858">78ab91c</text>
<text transform="translate(957.0,798.6) rotate(-90)" style="font-family:'Liberation Mono',monospace;font-size:12px" fill="#585858">78ab91c</text>
<text transform="translate(976.5,798.6) rotate(-90)" style="font-family:'Liberation Mono',monospace;font-size:12px" fill="#585858">96c89c0</text>
<text transform="translate(996.0,798.6) rotate(-90)" style="font-family:'Liberation Mono',monospace;font-size:12px" fill="#585858">96c89c0</text>
<text transform="translate(1015.4,798.6) rotate(-90)" style="font-family:'Liberation Mono',monospace;font-size:12px" fill="#585858">96c89c0</text>
<text transform="translate(1034.9,798.6) rotate(-90)" style="font-family:'Liberation Mono',monospace;font-size:12px" fill="#585858">d670193</text>
<text transform="translate(1054.3,798.6) rotate(-90)" style="font-family:'Liberation Mono',monospace;font-size:12px" fill="#585858">d670193</text>
<text transform="translate(1073.8,798.6) rotate(-90)" style="font-family:'Liberation Mono',monospace;font-size:12px" fill="#585858">d670193</text>
<text transform="translate(1093.3,798.6) rotate(-90)" style="font-family:'Liberation Mono',monospace;font-size:12px" fill="#585858">d670193</text>
<text transform="translate(1112.7,798.6) rotate(-90)" style="font-family:'Liberation Mono',monospace;font-size:12px" fill="#585858">d670193</text>
<text transform="translate(1132.2,798.6) rotate(-90)" style="font-family:'Liberation Mono',monospace;font-size:12px" fill="#585858">0ec8a4f</text>
<text transform="translate(1151.6,798.6) rotate(-90)" style="font-family:'Liberation Mono',monospace;font-size:12px" fill="#585858">0ec8a4f</text>
<text transform="translate(1171.1,798.6) rotate(-90)" style="font-family:'Liberation Mono',monospace;font-size:12px" fill="#585858">0ec8a4f</text>
<text transform="translate(1190.6,798.6) rotate(-90)" style="font-family:'Liberation Mono',monospace;font-size:12px" fill="#585858">0ec8a4f</text>
<text transform="translate(1210.0,798.6) rotate(-90)" style="font-family:'Liberation Mono',monospace;font-size:12px" fill="#585858">0ec8a4f</text>
<text transform="translate(1229.5,798.6) rotate(-90)" style="font-family:'Liberation Mono',monospace;font-size:12px" fill="#585858">0ec8a4f</text>
<text transform="translate(1248.9,798.6) rotate(-90)" style="font-family:'Liberation Mono',monospace;font-size:12px" fill="#585858">0ec8a4f</text>
</g>
</svg>
<div class="a" style="left:26px;top:836px;width:1308px;height:3px;background:#343434"></div>
</body></html>
